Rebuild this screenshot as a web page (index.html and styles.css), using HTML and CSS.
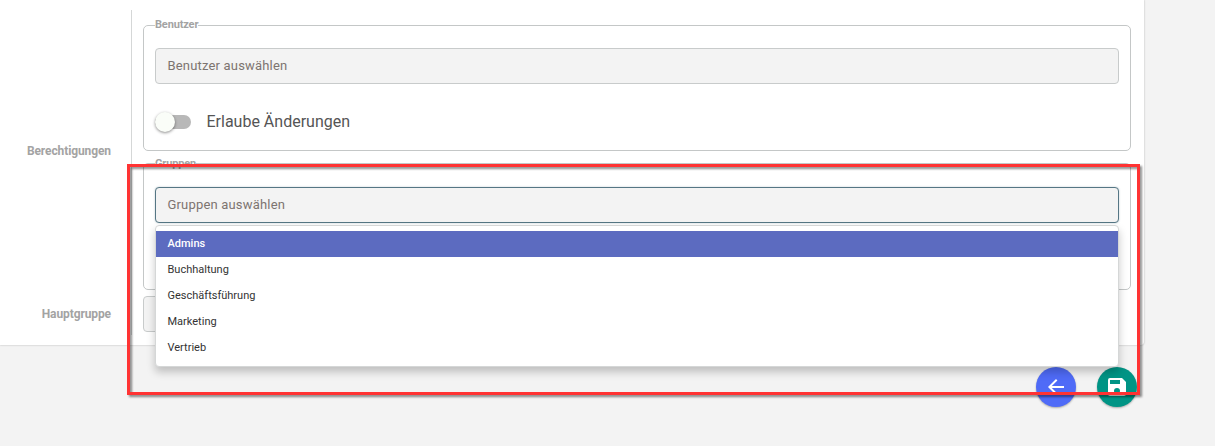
FILE: index.html
```
<!DOCTYPE html>
<html lang="de">
<head>
  <meta charset="UTF-8">
  <meta name="viewport" content="width=device-width, initial-scale=1.0">
  <title>Berechtigungen</title>
  <link rel="stylesheet" href="styles.css">
</head>
<body>
  <main class="card">
    <div class="row">
      <div class="label">Berechtigungen</div>
      <div class="content">
        <fieldset>
          <legend>Benutzer</legend>
          <div class="select">Benutzer auswählen</div>
          <div class="toggle">
            <span class="switch"></span>
            <span>Erlaube Änderungen</span>
          </div>
        </fieldset>
        <fieldset class="groups">
          <legend>Gruppen</legend>
          <div class="select open">Gruppen auswählen
            <ul class="dropdown">
              <li class="active">Admins</li>
              <li>Buchhaltung</li>
              <li>Geschäftsführung</li>
              <li>Marketing</li>
              <li>Vertrieb</li>
            </ul>
          </div>
        </fieldset>
      </div>
    </div>
    <div class="row main-group">
      <div class="label">Hauptgruppe</div>
      <div class="content">
        <div class="select"></div>
      </div>
    </div>
  </main>
  <div class="actions">
    <button class="back" aria-label="Zurück">
      <svg viewBox="0 0 24 24" width="24" height="24"><path d="M20 11H7.83l5.59-5.59L12 4l-8 8 8 8 1.41-1.41L7.83 13H20v-2z"/></svg>
    </button>
    <button class="save" aria-label="Speichern">
      <svg viewBox="0 0 24 24" width="24" height="24"><path d="M17 3H5a2 2 0 0 0-2 2v14a2 2 0 0 0 2 2h14a2 2 0 0 0 2-2V7l-4-4zm-5 16a3 3 0 1 1 0-6 3 3 0 0 1 0 6zm3-10H5V5h10v4z"/></svg>
    </button>
  </div>
  <div class="highlight"></div>
</body>
</html>
```

FILE: styles.css
```
* { box-sizing: border-box; }
body {
  margin: 0;
  height: 446px;
  overflow: hidden;
  position: relative;
  background: #f3f3f3;
  font-family: Roboto, sans-serif;
  color: #555;
}
.card {
  width: 1144px;
  height: 345px;
  padding-top: 10px;
  background: white;
  border-radius: 0 0 3px 0;
  box-shadow: 0 0 2px rgba(0,0,0,0.3);
}
.row {
  display: flex;
  height: 282px;
}
.label {
  width: 132px;
  padding-right: 20px;
  border-right: 1px solid #d5d7d7;
  display: flex;
  align-items: center;
  justify-content: flex-end;
  font-size: 12px;
  font-weight: 700;
  letter-spacing: -0.1px;
  color: #a3a3a3;
}
.content {
  width: 988px;
  margin-left: 11px;
  padding-top: 8px;
}
fieldset {
  height: 133px;
  margin: 0 0 6px;
  padding: 16px 11px 0;
  border: 1px solid #c4c7c7;
  border-radius: 5px;
}
legend {
  height: 14px;
  padding: 0;
  font-size: 11px;
  line-height: 13px;
  font-weight: 700;
  letter-spacing: -0.15px;
  color: #a3a3a3;
}
.groups legend { height: 13px; }
.groups { padding-top: 17px; }
.select {
  position: relative;
  height: 36px;
  padding: 0 11.5px;
  border: 1px solid #c8cbcb;
  border-radius: 4px;
  background: #f3f3f3;
  font-size: 13px;
  line-height: 34px;
  letter-spacing: 0.18px;
  color: #7d7470;
}
.select.open {
  border-color: #557684;
  box-shadow: 0 0 2px rgba(85,118,132,0.4);
}
.dropdown {
  position: absolute;
  z-index: 1;
  top: 37px;
  left: -1px;
  width: 964px;
  height: 142px;
  margin: 0;
  padding: 5px 0;
  list-style: none;
  background: white;
  border: 1px solid #d5d7d7;
  border-radius: 4px;
  box-shadow: 0 5px 8px rgba(0,0,0,0.22);
  font-size: 11px;
  line-height: 26px;
  letter-spacing: 0;
  color: #333;
}
.dropdown li { padding-left: 11.5px; }
.dropdown .active {
  background: #5c6bc0;
  color: white;
  font-weight: 500;
}
.toggle {
  display: flex;
  align-items: center;
  gap: 15.5px;
  height: 20px;
  margin-top: 28px;
  font-size: 16px;
  line-height: 20px;
}
.switch {
  position: relative;
  width: 36px;
  height: 14px;
  border-radius: 7px;
  background: #b8b8b8;
}
.switch::before {
  content: "";
  position: absolute;
  top: -3px;
  left: 0;
  width: 20px;
  height: 20px;
  border-radius: 50%;
  background: #fafdf8;
  box-shadow: 0 1px 3px rgba(0,0,0,0.45);
}
.main-group { height: 43px; }
.main-group .content {
  width: 970px;
  padding-top: 4px;
}
.actions {
  display: flex;
  justify-content: flex-end;
  gap: 21px;
  margin: 22px 78px 0 0;
}
.actions button {
  width: 40px;
  height: 40px;
  padding: 8px;
  border: none;
  border-radius: 50%;
  box-shadow: 0 1px 2px rgba(0,0,0,0.3);
}
.actions svg {
  display: block;
  fill: white;
}
.back { background: #4f6bf7; }
.save { background: #009485; }
.highlight {
  position: absolute;
  z-index: 2;
  top: 164px;
  left: 127px;
  width: 1013px;
  height: 231px;
  border: 3px solid #ff3333;
  filter: drop-shadow(2px 2px 1px rgba(0,0,0,0.45));
}
```
